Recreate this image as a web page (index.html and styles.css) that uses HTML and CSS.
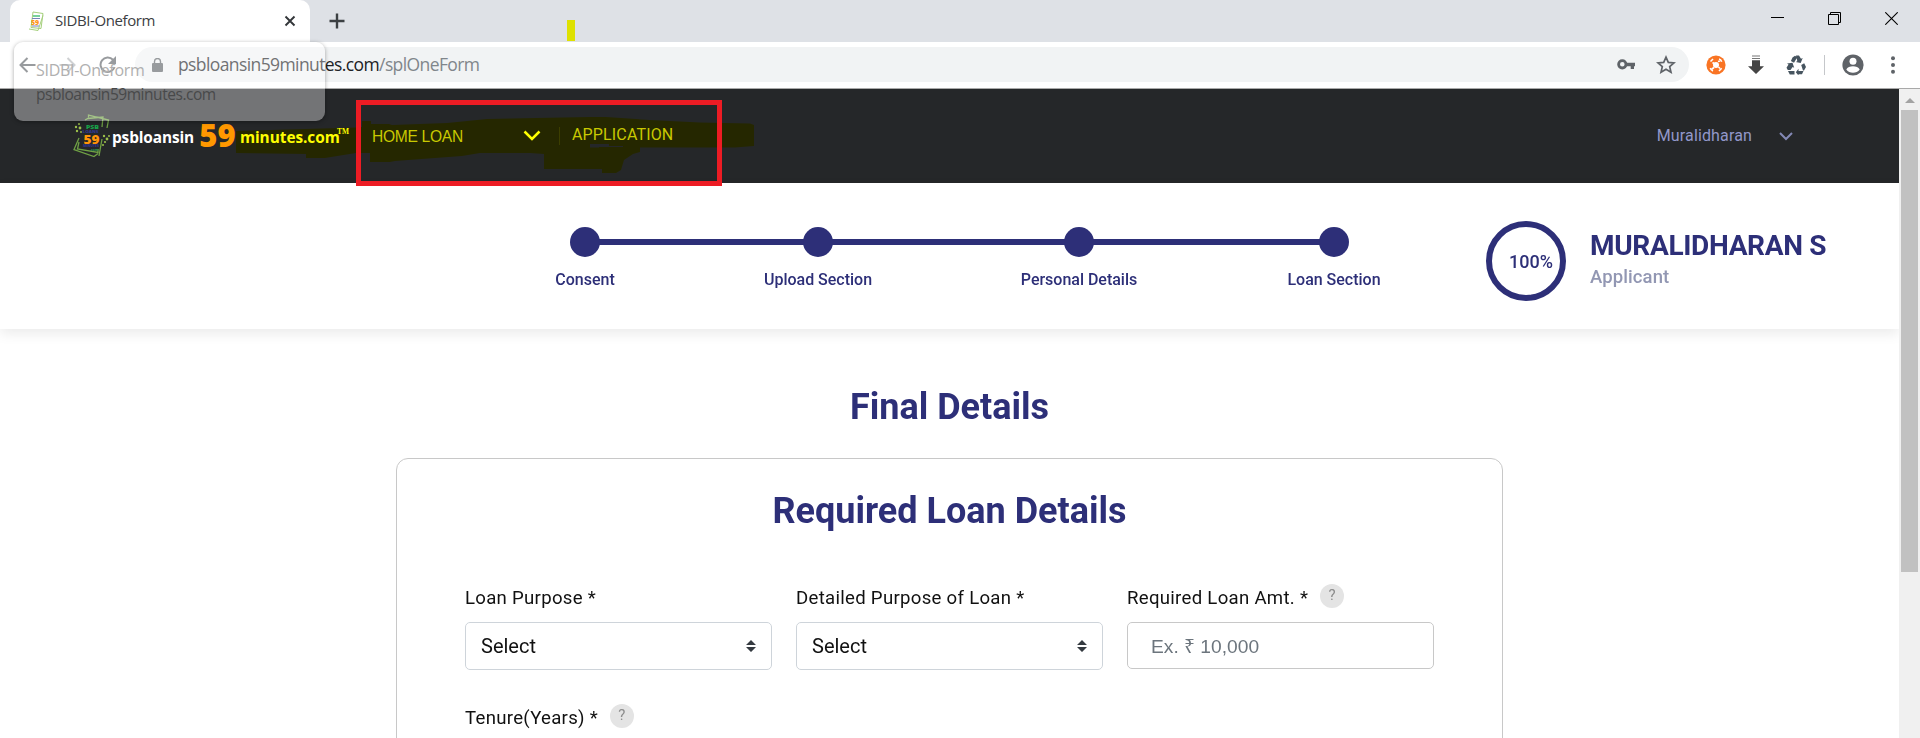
FILE: index.html
```
<!DOCTYPE html>
<html lang="en">
<head>
<meta charset="utf-8">
<title>SIDBI-Oneform</title>
<link rel="stylesheet" href="styles.css">
</head>
<body>
<div class="window">
  <div class="tabstrip">
    <div class="tab">
      <svg class="favicon" width="18" height="20" viewBox="0 0 18 20"><path d="M6 1l10 1.500-2 15-10-1zM2 18l9 1.500 5-15" fill="#fff" stroke="#a5cf7c" stroke-width="1"/><path d="M6 5h7" stroke="#4cc27c" stroke-width="1.500"/><path d="M5 7.500h8M5 15h7" stroke="#7882b8" stroke-width="1.200"/><text x="4" y="13.500" font-family="Open Sans" font-size="7" font-weight="800" fill="#ff9416">59</text></svg>
      <span class="tab-title">SIDBI-Oneform</span>
      <svg class="tab-close" width="12" height="12" viewBox="0 0 12 12"><path d="M1.500 1.500l9 9M10.500 1.500l-9 9" stroke="#333639" stroke-width="1.900"/></svg>
    </div>
    <svg class="new-tab" width="16" height="16" viewBox="0 0 16 16"><path d="M8 .5v15M.5 8h15" stroke="#3c4043" stroke-width="2.400"/></svg>
    <div class="win-controls">
      <svg width="13" height="13" viewBox="0 0 13 13"><path d="M0 5.500h13" stroke="#000"/></svg>
      <svg width="13" height="13" viewBox="0 0 13 13" fill="none" stroke="#000"><path d="M.5 2.500h10v10H.5zM2.500 2.500V.5h10v10h-2"/></svg>
      <svg width="13" height="13" viewBox="0 0 13 13"><path d="M.3.3l12.400 12.400M12.700.3L.3 12.700" stroke="#000" stroke-width="1.100"/></svg>
    </div>
  </div>

  <div class="toolbar">
    <svg class="nav back" width="17" height="16" viewBox="0 0 17 16" fill="none" stroke="#5f6368" stroke-width="2"><path d="M16.500 8H2M8.500 1L1.500 8l7 7"/></svg>
    <svg class="nav fwd" width="17" height="16" viewBox="0 0 17 16" fill="none" stroke="#b5b7ba" stroke-width="2"><path d="M.5 8H15M8.500 1l7 7-7 7"/></svg>
    <svg class="nav reload" width="18" height="18" viewBox="0 0 18 18"><path d="M15.600 11A7.200 7.200 0 1 1 14 3.800" fill="none" stroke="#5f6368" stroke-width="2"/><path d="M17 0v8H9z" fill="#5f6368"/></svg>
    <div class="omnibox">
      <svg class="lock" width="11" height="14" viewBox="0 0 11 14"><rect y="5" width="11" height="9" rx="1" fill="#5f6368"/><path d="M2.500 6V3.500a3 3 0 0 1 6 0V6" fill="none" stroke="#5f6368" stroke-width="1.400"/></svg>
      <span class="url">psbloansin59minutes.com<span class="path">/splOneForm</span></span>
      <svg class="key" width="18" height="11" viewBox="0 0 18 11"><circle cx="5.300" cy="5.300" r="3.700" fill="none" stroke="#5f6368" stroke-width="2.800"/><path d="M9 3.700h9v3.600h-1V10h-3.300V7.300H9z" fill="#5f6368"/></svg>
      <svg class="star" width="20" height="19" viewBox="0 0 20 19"><path d="M10 2.200l2.300 5.200 5.700.5-4.300 3.700 1.300 5.600-5-3-5 3 1.300-5.600L2 7.900l5.700-.5z" fill="none" stroke="#5f6368" stroke-width="1.700"/></svg>
    </div>
    <div class="extensions">
      <svg width="20" height="20" viewBox="0 0 20 20"><circle cx="10" cy="10" r="9.600" fill="#f97424"/><circle cx="10" cy="10" r="3" fill="#fff"/><g fill="none" stroke="#fff" stroke-width="1.600"><path d="M4.500 6.500L7 4M13 4c1 .2 2.200 1.300 2.700 2.700M4.300 13c.4 1.300 1.500 2.500 2.700 3M13 16l2.700-2.700M6.500 7.500L8 8.500M12 6.500l2-.5M6 14l2-1.500M12.500 12l1.500 1.500"/></g></svg>
      <svg width="16" height="20" viewBox="0 0 16 20"><path d="M4 1h8M4 3.500h8" stroke="#777" stroke-width="1.200"/><path d="M4 5.200h8v6h4L8 19l-8-7.800h4z" fill="#444"/></svg>
      <svg width="20" height="20" viewBox="0 0 20 20" fill="#46545f"><path d="M6.500 2.500L9 .8l2.200 1.400L8 7.800 4.900 6zM10 .5h3l2 3.200 1.700-.8-2 5-5-.8 1.600-.9zM1 8.500l5.500-.7 1.700 5-1.600-.8L4.500 15H1.800L.5 12.700l2-3.200zM2 16h6.500v3.500H3.800zM15.200 10l3-1.700L20 12l-2 3.500h-1zM17.500 16L16 19.300h-3.500V20.500L9.800 17.300l2.700-3.500V16z"/></svg>
    </div>
    <span class="divider"></span>
    <svg class="avatar" width="22" height="22" viewBox="0 0 22 22"><circle cx="11" cy="11" r="10.600" fill="#5f6368"/><circle cx="11" cy="7.300" r="3.500" fill="#fff"/><path d="M4.300 15.500c2-4.400 11.400-4.400 13.400 0-3 4.400-10.400 4.400-13.400 0z" fill="#fff"/></svg>
    <svg class="kebab" width="4" height="18" viewBox="0 0 4 18" fill="#5f6368"><circle cx="2" cy="2.300" r="2"/><circle cx="2" cy="9" r="2"/><circle cx="2" cy="15.700" r="2"/></svg>
  </div>

  <div class="viewport">
    <div class="page">
      <header class="site-header">
        <svg class="logo-mark" width="38" height="44" viewBox="0 0 38 44">
          <g fill="none" stroke="#6fa044" stroke-width="1.300"><path d="M15.500 3.500V1l20 5-1.500 8M29 25l-3 17M12 6l3-1.500 15-1.500-1 10M6 24L1 35.500l20 7 4-3M6 28l-1.500 7 20.500 3.500V35"/></g>
          <g fill="#9bbf4a"><circle cx="3" cy="13" r="1.200"/><circle cx="6" cy="10" r="1"/><circle cx="7" cy="14" r="1.400"/><circle cx="4" cy="17" r="1.200"/><circle cx="8" cy="18" r=".9"/><circle cx="31" cy="22" r="1.200"/><circle cx="34" cy="25" r="1.400"/><circle cx="32" cy="28" r="1.100"/><circle cx="36" cy="22" r="1"/><circle cx="30" cy="31" r="1"/></g>
          <g font-family="Open Sans" font-weight="800"><text x="13" y="15" font-size="5.500" fill="#18a34a" textLength="13" lengthAdjust="spacingAndGlyphs">PSB</text><text x="9.500" y="19.300" font-size="3.600" fill="#30368c" textLength="16" lengthAdjust="spacingAndGlyphs">LOANS</text><text x="10.500" y="29.500" font-size="12" fill="#ff9408" textLength="16" lengthAdjust="spacingAndGlyphs">59</text><text x="10" y="33.300" font-size="3.200" fill="#30368c" textLength="16" lengthAdjust="spacingAndGlyphs">MINUTES</text><text x="17" y="37" font-size="3.600" fill="#2c8c50" textLength="8" lengthAdjust="spacingAndGlyphs">.com</text></g>
        </svg>
        <div class="wordmark"><span class="w-a">psbloansin</span><span class="w-59">59</span><span class="w-b">minutes.com</span><span class="tm">TM</span></div>
        <nav class="menu">
          <span class="home">HOME LOAN</span>
          <svg class="chev" width="18" height="12" viewBox="0 0 18 12"><path d="M1.500 1.500L9 9l7.500-7.500" fill="none" stroke="#fff" stroke-width="2.500"/></svg>
          <span class="menu-rule"></span>
          <span class="application">APPLICATION</span>
        </nav>
        <div class="user"><span>Muralidharan</span><svg width="14" height="9" viewBox="0 0 14 9"><path d="M1 1l6 6 6-6" fill="none" stroke="#8388b5" stroke-width="2"/></svg></div>
      </header>

      <section class="progress">
        <ol class="steps">
          <li class="step">Consent</li>
          <li class="step">Upload Section</li>
          <li class="step">Personal Details</li>
          <li class="step">Loan Section</li>
        </ol>
        <div class="ring">100%</div>
        <div class="applicant"><div class="name">MURALIDHARAN S</div><div class="role">Applicant</div></div>
      </section>

      <main class="content">
        <h1>Final Details</h1>
        <section class="card">
          <h2>Required Loan Details</h2>
          <div class="fields">
            <div class="field"><div class="label">Loan Purpose *</div>
              <div class="select">Select<svg width="10" height="12" viewBox="0 0 10 12"><path d="M0 5l5-5 5 5zM0 7l5 5 5-5z" fill="#343a40"/></svg></div></div>
            <div class="field"><div class="label">Detailed Purpose of Loan *</div>
              <div class="select">Select<svg width="10" height="12" viewBox="0 0 10 12"><path d="M0 5l5-5 5 5zM0 7l5 5 5-5z" fill="#343a40"/></svg></div></div>
            <div class="field"><div class="label">Required Loan Amt. *<span class="help">?</span></div>
              <div class="input">Ex. ₹ 10,000</div></div>
            <div class="field"><div class="label">Tenure(Years) *<span class="help">?</span></div></div>
          </div>
        </section>
      </main>
    </div>
    <div class="scrollbar"><svg width="10" height="5" viewBox="0 0 10 5"><path d="M0 5l5-5 5 5z" fill="#a3a3a3"/></svg><div class="thumb"></div></div>
  </div>

  <div class="tab-tooltip"><div class="tip-title">SIDBI-Oneform</div><div class="tip-url">psbloansin59minutes.com</div></div>
  <svg class="marker" width="1920" height="738" viewBox="0 0 1920 738"><path fill="#ff0" fill-rule="evenodd" d="M236 131L356 127.500L362 127V121H371V124H389L392 125L447 123L487 119L535 118L590 117H606L650 120L700 122.500L750 123.500L754 125V146L735 147.500H640V152L633 154L624 160L621 170L616 173H602V169H544V154L530 153H480L462 156L395 161L390 162H370V153L356 153L325 158H306V154L236 153ZM590 144V147.500H599V147H623V146H609V144Z"/></svg>
  <div class="marker-dab"></div>
  <div class="red-box"></div>
</div>
</body>
</html>
```
FILE: styles.css
```
* { box-sizing: border-box; }
body { margin: 0; background: #fff; font-family: Roboto, "Noto Sans", sans-serif; }
svg { display: block; flex: none; }
.window { position: relative; width: 1920px; height: 738px; overflow: hidden; display: flex; flex-direction: column; isolation: isolate; }

.tabstrip { height: 42px; flex: none; background: #dee1e6; display: flex; align-items: flex-start; padding-left: 10px; }
.tab { width: 300px; height: 42px; background: #fff; border-radius: 10px 10px 0 0; display: flex; align-items: center; padding: 0 14px 0 17px; }
.tab-title { margin: -2px 0 0 10px; font: 15px/20px "Open Sans", sans-serif; letter-spacing: -.42px; color: #3c4043; flex: 1; white-space: nowrap; }
.new-tab { margin: 13px 0 0 19px; }
.win-controls { margin-left: auto; display: flex; gap: 44px; padding: 12px 22px 0 0; }

.toolbar { height: 47px; flex: none; border-bottom: 1px solid #a9a9a9; background: #fff; display: flex; align-items: center; padding: 0 0 1px 19px; }
.fwd { margin-left: 23px; }
.reload { margin-left: 23px; }
.omnibox { margin-left: 18px; width: 1554px; height: 35px; border-radius: 18px; background: #f1f3f4; display: flex; align-items: center; padding: 0 13px 0 17px; margin-right: 17px; }
.url { margin: -1px 0 0 15px; flex: 1; font: 17.500px/24px "Open Sans", sans-serif; letter-spacing: -.6px; color: #202124; white-space: nowrap; }
.path { color: #80868b; }
.key { margin-right: 21px; }
.extensions { display: flex; gap: 22px; align-items: center; }
.divider { width: 1px; height: 20px; background: #c5c7ca; margin: 0 17px 0 18px; }
.kebab { margin-left: 27px; }

.viewport { flex: 1; display: flex; min-height: 0; }
.page { width: 1899px; overflow: hidden; }
.scrollbar { width: 21px; background: #f0f0f0; display: flex; flex-direction: column; align-items: center; padding-top: 9px; }
.thumb { width: 17px; height: 462px; margin-top: 7px; background: #c1c1c1; }

.site-header { height: 94px; background: #252729; display: flex; align-items: flex-start; padding: 25px 106px 0 73px; }
.wordmark { width: 238px; height: 44px; display: flex; align-items: flex-start; font: 700 15.400px/44px "Open Sans", sans-serif; color: #fff; white-space: nowrap; }
.w-a { margin: 2px 0 0 1px; width: 88px; letter-spacing: -.12px; }
.w-59 { width: 41px; font-size: 31px; font-weight: 800; color: #ff9800; margin-top: -1px; }
.w-b { margin-top: 2px; width: 97px; letter-spacing: -.05px; }
.tm { font: 700 7.500px/8px "Liberation Serif", serif; margin-top: 14px; }
.menu { display: flex; align-items: flex-start; margin-left: 23px; padding-top: 11px; color: #c9c9c9; font-size: 16px; line-height: 22px; }
.home { width: 151px; font-family: "Liberation Sans", sans-serif; font-size: 15.600px; letter-spacing: -.3px; padding-top: 1px; }
.chev { margin-top: 5px; }
.menu-rule { width: 1px; height: 18px; margin: 2px 12px 0 18px; background: #3c3e40; }
.application { margin-top: -1px; letter-spacing: .15px; }
.user { margin-left: auto; display: flex; align-items: center; gap: 27px; padding-top: 11px; color: #9297ca; font-size: 16px; line-height: 22px; letter-spacing: .14px; }

.progress { position: relative; height: 146px; background: #fff; box-shadow: 0 5px 12px rgba(0,0,0,.08); display: flex; align-items: flex-start; }
.steps { margin: 44px 0 0 455px; padding: 0; list-style: none; width: 1008px; display: grid; grid-template-columns: 259px 207px 315px 195px; }
.step { position: relative; padding-top: 42px; text-align: center; color: #2d2f78; font-weight: 500; font-size: 16px; line-height: 22px; letter-spacing: -.01px; text-indent: 1px; }
.step::before { content: ""; position: absolute; left: calc(50% - 15px); top: 0; width: 30px; height: 30px; border-radius: 50%; background: #2d2f78; }
.step:not(:last-child)::after { content: ""; position: absolute; left: 50%; top: 12px; width: 260px; height: 6px; background: #2d2f78; }
.step:nth-child(1)::after { width: 233px; }
.step:nth-child(3)::after { width: 255px; }
.ring { margin: 38px 0 0 23px; width: 80px; height: 80px; border: 6px solid #2d2f78; border-radius: 50%; color: #2d2f78; font-weight: 500; font-size: 18px; line-height: 70px; padding-left: 17px; }
.applicant { margin: 46px 0 0 24px; white-space: nowrap; }
.name { font-weight: 700; font-size: 28px; line-height: 33px; letter-spacing: -.33px; color: #2d2f78; }
.role { font-weight: 500; font-size: 18.500px; line-height: 30px; letter-spacing: .1px; color: #9297b3; }

.content { padding: 54px 0 0 396px; }
h1, h2 { margin: 0; text-align: center; color: #2d2f78; font-weight: 700; font-size: 36px; line-height: 48px; }
h1 { width: 1107px; }
.card { width: 1107px; height: 340px; margin-top: 27px; border: 1px solid #c8c8c8; border-radius: 12px; padding: 28px 68px 0; }
.fields { display: grid; grid-template-columns: repeat(3, 307px); gap: 34px 24px; margin-top: 49px; }
.label { height: 28px; display: flex; align-items: center; color: #111; font-size: 18.600px; letter-spacing: .29px; padding-bottom: 1px; white-space: nowrap; }
.help { width: 24px; height: 24px; margin: -3px 0 0 12px; border-radius: 50%; background: #e4e4e4; color: #8c8c8c; text-align: center; font-size: 15px; line-height: 22px; }
.select, .input { margin-top: 10px; height: 48px; border: 1px solid #ced4da; border-radius: 5px; display: flex; align-items: center; font-size: 20px; color: #111; padding: 0 15px; }
.select { justify-content: space-between; }
.input { height: 47px; border-color: #c8c8c8; color: #6c757d; padding: 0 23px 1px; font-family: "Liberation Sans", "Noto Sans", sans-serif; font-size: 19.200px; }

/* Layers floating above the window */
.tab-tooltip { position: absolute; left: 14px; top: 42px; width: 311px; height: 79px; border-radius: 9px; background: rgba(255,255,255,.36); box-shadow: 0 1px 4px rgba(0,0,0,.35); padding: 17px 22px; font-family: "Open Sans", sans-serif; white-space: nowrap; }
.tip-title { font-size: 16px; line-height: 22px; color: #b0b0b0; letter-spacing: -.3px; }
.tip-url { margin-top: 2px; font-size: 15.500px; line-height: 22px; color: #48494a; letter-spacing: -.46px; }
.marker { position: absolute; left: 0; top: 0; mix-blend-mode: multiply; }
.marker-dab { position: absolute; left: 567px; top: 20px; width: 8px; height: 21px; background: #dee100; }
.red-box { position: absolute; left: 356px; top: 100px; width: 366px; height: 86px; border: 5px solid #ed1c24; }
```
